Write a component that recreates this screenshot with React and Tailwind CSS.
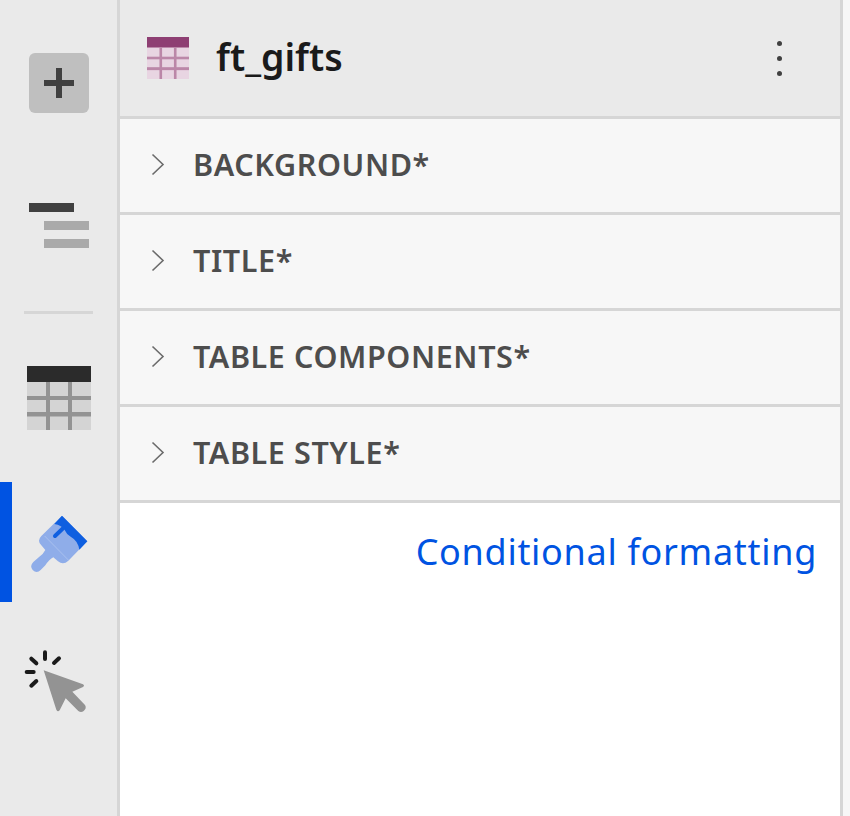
const sections = ["BACKGROUND*", "TITLE*", "TABLE COMPONENTS*", "TABLE STYLE*"];

function TableIcon({ className, head, body, line }) {
  return (
    <svg viewBox="0 0 64 64" className={className}>
      <rect width="64" height="64" fill={body} />
      <rect width="64" height="16" fill={head} />
      <rect x="19" y="16" width="4" height="48" fill={line} />
      <rect x="41" y="16" width="4" height="48" fill={line} />
      <rect y="30" width="64" height="4" fill={line} />
      <rect y="46" width="64" height="4.5" fill={line} />
    </svg>
  );
}

function BrushIcon() {
  return (
    <svg viewBox="90 70 180 180" className="h-[60px] w-[60px]">
      <path
        d="M186 75 L262 152 L205 210 Q190 224 174 212 L160 200 Q148 206 136 224 L122 238 Q110 250 98 238 Q88 226 100 214 L118 198 Q130 190 136 178 L124 164 Q110 150 124 136 Z"
        fill="#8fade9"
      />
      <path
        d="M186 75 L262 152 L238 177 Q234 150 212 138 Q200 132 194 118 Q186 104 163 100 Z"
        fill="#0f5fe0"
      />
      <path d="M165 136 L190 112" stroke="#0f5fe0" strokeWidth="12" strokeLinecap="round" />
      <path d="M134 136 L205 208" stroke="#c3d3f3" strokeWidth="1.5" />
    </svg>
  );
}

function CursorIcon() {
  return (
    <svg viewBox="70 925 195 195" className="h-[65px] w-[65px]">
      <g stroke="#1a1a1a" strokeWidth="12" strokeLinecap="round">
        <path d="M136 938 V958" />
        <path d="M95 957 L110 971" />
        <path d="M178 956 L163 970" />
        <path d="M81 997 H102" />
        <path d="M95 1038 L110 1024" />
      </g>
      <path
        d="M132 992 L250 1034 Q256 1038 250 1042 L218 1056 L256 1096 Q262 1106 252 1114 Q244 1120 236 1114 L198 1076 L180 1112 Q174 1118 170 1110 Z"
        fill="#939393"
      />
    </svg>
  );
}

export default function App() {
  return (
    <div className="flex h-[816px] w-[850px] overflow-hidden bg-[#f7f7f7] font-['Noto_Sans',sans-serif]">
      <aside className="flex w-[120px] shrink-0 flex-col items-center border-r-[3px] border-[#d6d6d6] bg-[#eaeaea]">
        <button className="mt-[53px] flex h-[60px] w-[60px] items-center justify-center rounded-md bg-[#bfbfbf]">
          <svg viewBox="0 0 30 30" className="h-[30px] w-[30px]">
            <path d="M12 0h6v12h12v6H18v12h-6V18H0v-6h12z" fill="#404040" />
          </svg>
        </button>
        <div className="mt-[90px] flex w-[60px] flex-col gap-[9px]">
          <div className="h-[9px] w-[45px] bg-[#404040]" />
          <div className="ml-[15px] h-[9px] w-[45px] bg-[#aaaaaa]" />
          <div className="ml-[15px] h-[9px] w-[45px] bg-[#aaaaaa]" />
        </div>
        <div className="mt-[63px] h-[3px] w-[69px] bg-[#d6d6d6]" />
        <TableIcon className="mt-[52px] h-[64px] w-[64px]" head="#2b2b2b" body="#d4d4d4" line="#939393" />
        <div className="mt-[52px] flex h-[120px] w-full items-center justify-center border-l-[12px] border-[#0053e2] pr-[9px] pt-[3px]">
          <BrushIcon />
        </div>
        <div className="mt-[46px] pr-[6px]">
          <CursorIcon />
        </div>
      </aside>

      <main className="flex w-[723px] shrink-0 flex-col border-r-[3px] border-[#d6d6d6] bg-white">
        <header className="flex h-[119px] items-center border-b-[3px] border-[#d6d6d6] bg-[#eaeaea] pl-[27px] pr-[58px]">
          <TableIcon className="h-[42px] w-[42px]" head="#8e3f73" body="#e8d5e2" line="#bb87a8" />
          <h1 className="ml-[27px] flex-1 pb-[2px] text-[37.5px] font-semibold text-[#1a1a1a]">ft_gifts</h1>
          <div className="flex flex-col gap-[10px]">
            <span className="h-[5px] w-[5px] rounded-full bg-[#404040]" />
            <span className="h-[5px] w-[5px] rounded-full bg-[#404040]" />
            <span className="h-[5px] w-[5px] rounded-full bg-[#404040]" />
          </div>
        </header>
        {sections.map((name) => (
          <div key={name} className="flex h-[96px] items-center border-b-[3px] border-[#d6d6d6] bg-[#f7f7f7] pb-[2px] pl-[31px]">
            <svg viewBox="0 0 14 23" className="h-[23px] w-[14px]">
              <path d="M1.5 1.5 L12 11.5 L1.5 21.5" fill="none" stroke="#6b6b6b" strokeWidth="1.6" />
            </svg>
            <span className="ml-[28px] text-[30.5px] font-semibold tracking-[0.6px] text-[#4d4d4d]">{name}</span>
          </div>
        ))}
        <a className="mt-[24px] self-end pr-[23px] text-[36px] leading-[50px] tracking-[0.7px] text-[#0053e2]">Conditional formatting</a>
      </main>
    </div>
  );
}
